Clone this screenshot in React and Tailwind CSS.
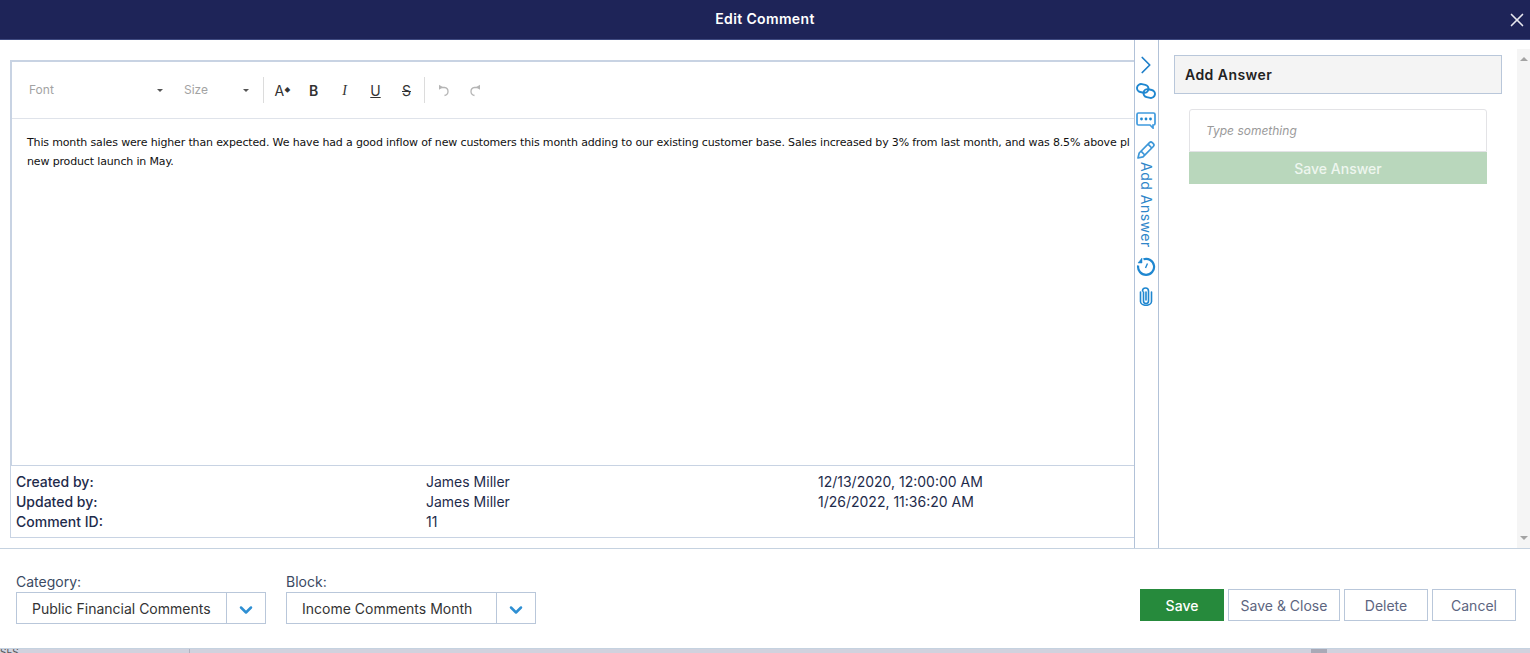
import React from 'react';
import { X, ChevronDown, ChevronRight } from 'lucide-react';

const inter = 'font-["Inter",sans-serif]';

function Caret() {
    return <span className="w-0 h-0 border-x-[3px] border-x-transparent border-t-[3px] border-t-[#555]" />;
}

function ToolbarSelect({ label, className }) {
    return (
        <div className={`flex items-center justify-between text-[12px] text-[#a3a3a3] ${className}`}>
            <span>{label}</span>
            <Caret />
        </div>
    );
}

function UndoIcon({ flip }) {
    return (
        <svg width="14" height="13" viewBox="0 0 14 13" fill="none" stroke="#b5b5b5" strokeWidth="1.300" className={flip ? '-scale-x-100' : ''}>
            <path d="M2.500 3.500h5a4 4 0 0 1 3.500 4c0 2-1.300 3.500-3.500 4" />
            <path d="M2 .8v5l4-2.500z" fill="#b5b5b5" stroke="none" />
        </svg>
    );
}

function ChainIcon() {
    return (
        <svg width="20" height="16" viewBox="0 0 20 16" fill="none" stroke="#1f87d0" strokeWidth="1.900">
            <rect x="1" y="1.500" width="11.500" height="8" rx="4" transform="rotate(12 7 5.500)" />
            <rect x="7.500" y="6.500" width="11.500" height="8" rx="4" transform="rotate(12 13 10.500)" />
        </svg>
    );
}

function CommentIcon() {
    return (
        <svg width="20" height="17" viewBox="0 0 20 17" fill="none">
            <path d="M2.500 1h15A1.500 1.500 0 0 1 19 2.500v9a1.500 1.500 0 0 1-1.500 1.500H17v3l-3-3H2.500A1.500 1.500 0 0 1 1 11.500v-9A1.500 1.500 0 0 1 2.500 1z" stroke="#3f9ade" strokeWidth="1.700" />
            <circle cx="5.500" cy="7" r="1.400" fill="#1f87d0" />
            <circle cx="10" cy="7" r="1.400" fill="#1f87d0" />
            <circle cx="14.500" cy="7" r="1.400" fill="#1f87d0" />
        </svg>
    );
}

function PencilIcon() {
    return (
        <svg width="18" height="18" viewBox="0 0 18 18" fill="none" stroke="#3d97d8" strokeWidth="1.700" strokeLinejoin="round">
            <path d="M1 17l1.200-5L12.500 1.700a2 2 0 0 1 2.800 0l1 1a2 2 0 0 1 0 2.800L6 15.800z" />
            <path d="M4 10.200l3.800 3.800M11 3.200l3.800 3.800" />
        </svg>
    );
}

function ClockIcon() {
    return (
        <svg width="20" height="20" viewBox="0 0 20 20" fill="none" stroke="#1f87d0">
            <path d="M7.500 2.300a8 8 0 1 1-5.300 6.200" strokeWidth="2.200" />
            <path d="M6 1v5H2z" fill="#1f87d0" strokeWidth="0.500" />
            <path d="M11.500 6.500L9.500 11" strokeWidth="1.400" />
        </svg>
    );
}

function ClipIcon() {
    return (
        <svg width="14" height="19" viewBox="0 0 14 19" fill="none" stroke="#1f87d0" strokeWidth="1.600" strokeLinecap="round">
            <path d="M4.500 5v9a2.500 2.500 0 0 0 5 0V4a3 3 0 0 0-6 0" />
            <path d="M1.500 5v9.500a5.500 3.800 0 0 0 11 0V5" />
            <path d="M7 5v8" />
        </svg>
    );
}

function MetaRow({ label, name, date }) {
    return (
        <div className="flex h-5 items-center text-[14px] text-[#1e2b4b]">
            <span className="w-[410px] font-medium">{label}</span>
            <span className="w-[392px]">{name}</span>
            <span>{date}</span>
        </div>
    );
}

function SelectBox({ label, value, width }) {
    return (
        <div className={width}>
            <div className="text-[14px] leading-[18px] text-[#3b4a63]">{label}</div>
            <div className="flex h-[32px] mt-[1px] border border-[#b9c7da]">
                <div className="flex-1 pl-[15px] flex items-center text-[14px] text-[#333]">{value}</div>
                <div className="w-[39px] border-l border-[#b9c7da] flex items-center justify-center pt-1">
                    <ChevronDown size={20} strokeWidth={3} className="text-[#2e8fd3]" />
                </div>
            </div>
        </div>
    );
}

function OutlineButton({ children, width }) {
    return (
        <button className={`h-[32px] ${width} border border-[#b9c7da] text-[14px] text-[#5d6580] bg-white`}>
            {children}
        </button>
    );
}

export default function App() {
    return (
        <div className={`w-[1530px] h-[653px] flex flex-col overflow-hidden bg-white ${inter}`}>
            {/* Title bar */}
            <div className="relative h-10 shrink-0 bg-[#1e2458] border-b border-[#3f4a80] flex items-center justify-center pb-[2px]">
                <span className="text-[14px] font-semibold tracking-[0.35px] text-white">Edit Comment</span>
                <X size={22} strokeWidth={1.800} className="absolute right-[2px] top-[9px] text-[#e8e8ee]" />
            </div>

            {/* Body */}
            <div className="flex h-[509px] shrink-0 border-b border-[#c5d2e0]">
                <div className="w-[1134px] shrink-0 pl-[10px] pt-[20px] pb-[10px] flex flex-col">
                    <div className="flex-1 flex flex-col border-t-2 border-l-2 border-[#c8d3e3] min-h-0">
                        <div className="h-[57px] shrink-0 border-b border-[#dfe3ea] flex items-center pl-[17px]">
                            <ToolbarSelect label="Font" className="w-[135px] pr-[1px]" />
                            <ToolbarSelect label="Size" className="w-[65px] ml-[20px]" />
                            <div className="w-px h-[26px] bg-[#dcdcdc] ml-[14px]" />
                            <div className="flex items-center text-[#333] text-[14px] ml-[3px] w-[157px]">
                                <span className="w-[31px] text-center">A<span className="inline-block text-[6px] -translate-y-[4px]">◆</span></span>
                                <span className="w-[31px] text-center font-semibold">B</span>
                                <span className="w-[31px] text-center italic font-['Liberation_Serif',serif]">I</span>
                                <span className="w-[31px] text-center underline">U</span>
                                <span className="w-[31px] text-center line-through">S</span>
                            </div>
                            <div className="w-px h-[26px] bg-[#dcdcdc]" />
                            <div className="ml-[12px]"><UndoIcon /></div>
                            <div className="ml-[17px]"><UndoIcon flip /></div>
                        </div>
                        <div className="flex-1 overflow-hidden pl-[15px] pt-[14px] font-['DejaVu_Sans',sans-serif] text-[11px] leading-[19px] tracking-[-0.15px] text-[#111] whitespace-nowrap">
                            <div>This month sales were higher than expected. We have had a good inflow of new customers this month adding to our existing customer base. Sales increased by 3% from last month, and was 8.5% above pl</div>
                            <div>new product launch in May.</div>
                        </div>
                    </div>
                    <div className="h-[73px] shrink-0 border border-r-0 border-[#c8d3e3] pl-[5px] pt-[5px]">
                        <MetaRow label="Created by:" name="James Miller" date="12/13/2020, 12:00:00 AM" />
                        <MetaRow label="Updated by:" name="James Miller" date="1/26/2022, 11:36:20 AM" />
                        <MetaRow label="Comment ID:" name="11" />
                    </div>
                </div>

                {/* Icon rail */}
                <div className="w-[25px] shrink-0 border-x border-[#b2c2d8] flex flex-col items-center pt-[10px] pr-[1px]">
                    <ChevronRight size={30} strokeWidth={1.400} className="text-[#1f7fc9] shrink-0" />
                    <div className="mt-[3px]"><ChainIcon /></div>
                    <div className="mt-[13px]"><CommentIcon /></div>
                    <div className="mt-[12px]"><PencilIcon /></div>
                    <span className="[writing-mode:vertical-rl] text-[14px] leading-[16px] tracking-[0.5px] text-[#2f86c9] mt-[3px] h-[88px]">Add Answer</span>
                    <div className="mt-[7px]"><ClockIcon /></div>
                    <div className="mt-[10px]"><ClipIcon /></div>
                </div>

                {/* Answer panel */}
                <div className="flex-1 flex min-w-0">
                    <div className="w-[358px] shrink-0 pl-[15px] pt-[15px]">
                        <div className="w-[328px] h-[39px] bg-[#f4f4f4] border border-[#b9c7da] flex items-center pl-[10px] text-[14px] font-semibold tracking-[0.45px] text-[#222]">
                            Add Answer
                        </div>
                        <div className="ml-[15px] mt-[15px] w-[298px]">
                            <div className="h-[43px] border border-[#e3e3e6] rounded-t-[3px] flex items-center pl-[16px] text-[12px] italic text-[#9a9a9a]">
                                Type something
                            </div>
                            <div className="h-[32px] bg-[#b9d7bc] flex items-center justify-center text-[14px] font-medium text-[#eef6ef]">
                                Save Answer
                            </div>
                        </div>
                    </div>
                    <div className="w-[13px] shrink-0 bg-[#f5f5f5] flex flex-col items-center justify-between py-[8px] mt-[9px]">
                        <span className="w-0 h-0 border-x-[4px] border-x-transparent border-b-[4px] border-b-[#a3a3a3]" />
                        <span className="w-0 h-0 border-x-[4px] border-x-transparent border-t-[4px] border-t-[#a3a3a3]" />
                    </div>
                </div>
            </div>

            {/* Footer */}
            <div className="flex-1 flex items-start pl-[16px] pr-[14px] pt-[24px]">
                <div className="flex gap-[20px]">
                    <SelectBox label="Category:" value="Public Financial Comments" width="w-[250px]" />
                    <SelectBox label="Block:" value="Income Comments Month" width="w-[250px]" />
                </div>
                <div className="ml-auto flex gap-[4px] pt-[16px]">
                    <button className="h-[32px] w-[84px] bg-[#268a3c] text-[14px] font-medium text-white">Save</button>
                    <OutlineButton width="w-[112px]">Save &amp; Close</OutlineButton>
                    <OutlineButton width="w-[84px]">Delete</OutlineButton>
                    <OutlineButton width="w-[84px]">Cancel</OutlineButton>
                </div>
            </div>

            {/* Page behind the dialog */}
            <div className="h-[5px] shrink-0 bg-[#d1d2de] border-t border-[#c5d2e0] overflow-hidden flex">
                <span className="w-[190px] border-r border-[#b0b1bf] text-[10px] leading-[5px] text-[#555] pt-[1px]">SFS</span>
                <span className="ml-[1121px] w-[16px] bg-[#a9a9b6]" />
            </div>
        </div>
    );
}
